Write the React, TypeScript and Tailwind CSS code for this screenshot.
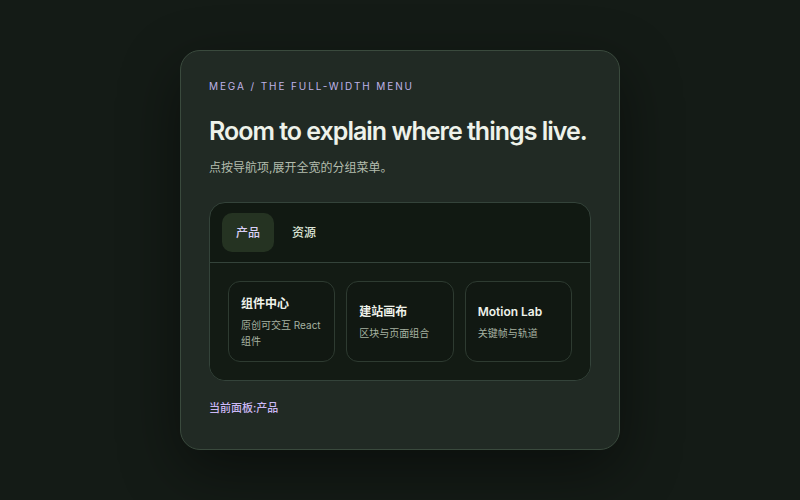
import React, { useState } from 'react';

type Item = { title: string; desc: string };

const panels: Record<string, Item[]> = {
  产品: [
    { title: '组件中心', desc: '原创可交互 React 组件' },
    { title: '建站画布', desc: '区块与页面组合' },
    { title: 'Motion Lab', desc: '关键帧与轨道' },
  ],
  资源: [
    { title: '文档', desc: '指南与 API 参考' },
    { title: '模板', desc: '开箱即用的页面' },
    { title: '更新日志', desc: '每周发布记录' },
  ],
};

const App: React.FC = () => {
  const [active, setActive] = useState<string>('产品');

  return (
    <div
      className="h-[500px] w-full bg-[#141b16] flex items-center justify-center"
      style={{ fontFamily: 'Inter, "Noto Sans CJK SC", sans-serif' }}
    >
      <div className="w-[440px] h-[400px] rounded-[20px] border border-[#3a4a3d] bg-[#212a24] px-7 pt-[28px] shadow-[0_20px_60px_rgba(0,0,0,0.45)]">
        {/* Eyebrow */}
        <p className="text-[10px] leading-[14px] tracking-[0.19em] text-[#bfb3e6] uppercase">
          Mega / The full-width menu
        </p>
        <h1 className="mt-[22px] text-[25px] leading-[32px] font-semibold tracking-[-0.04em] text-[#eef2ea] whitespace-nowrap">
          Room to explain where things live.
        </h1>
        <p className="mt-[11px] text-[12px] leading-[20px] text-[#b3bdae]">点按导航项,展开全宽的分组菜单。</p>

        {/* Menu panel */}
        <div className="mt-6 rounded-2xl border border-[#34433a] bg-[#111912] overflow-hidden">
          <div className="flex items-center gap-[4px] px-3 py-[10px] border-b border-[#34433a]">
            {Object.keys(panels).map((tab) => (
              <button
                key={tab}
                onClick={() => setActive(tab)}
                className={`h-[39px] px-[14px] rounded-[10px] text-[12px] font-medium ${
                  active === tab ? 'bg-[#253322] text-[#d9cff7]' : 'text-[#dfe6d8]'
                }`}
              >
                {tab}
              </button>
            ))}
          </div>
          <div className="grid grid-cols-3 gap-[11px] p-[18px] bg-[#131b14]">
            {panels[active].map((item) => (
              <div
                key={item.title}
                className="h-[81px] rounded-xl border border-[#2e3b31] bg-[#111812] px-[12px] flex flex-col justify-center"
              >
                <p className="text-[12px] leading-[18px] font-semibold text-[#eef2ea]">{item.title}</p>
                <p className="mt-[4px] text-[10px] leading-[16px] text-[#a6b2a1]">{item.desc}</p>
              </div>
            ))}
          </div>
        </div>

        <p className="mt-[18px] text-[11px] leading-[18px] font-medium text-[#cbb8f5]">当前面板:{active}</p>
      </div>
    </div>
  );
};

export default App;
